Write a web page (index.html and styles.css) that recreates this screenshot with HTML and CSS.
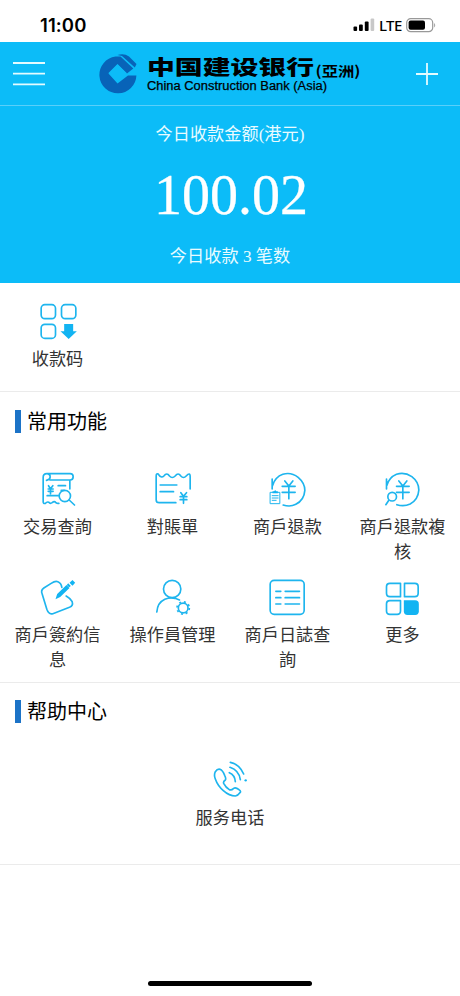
FILE: index.html
```html
<!DOCTYPE html>
<html lang="zh-Hans">
<head>
<meta charset="utf-8">
<meta name="viewport" content="width=device-width, initial-scale=1">
<title>中国建设银行(亞洲)</title>
<link rel="stylesheet" href="styles.css">
</head>
<body>
<div class="status">
  <span class="time">11:00</span>
  <div class="signals">
    <svg class="bars" width="22" height="14" viewBox="0 0 22 14"><rect x="0.5" y="8.5" width="3.6" height="4.5" rx="1"/><rect x="6" y="6.5" width="3.8" height="6.5" rx="1"/><rect x="11.8" y="3.5" width="3.8" height="9.5" rx="1"/><rect x="17.6" y="0.5" width="3.6" height="12.5" rx="1" fill="#c8c8c8"/></svg>
    <span class="lte">LTE</span>
    <svg class="battery" width="31" height="15" viewBox="0 0 31 15"><rect x="0.7" y="0.7" width="26" height="13" rx="4" fill="none" stroke="#999" stroke-width="1.2"/><rect x="2.600" y="2.600" width="16.400" height="9.200" rx="2"/><path d="M28.200 5q2 2.200 0 4.600z" fill="#999"/></svg>
  </div>
</div>
<header class="bar">
  <svg class="menu" width="34" height="26" viewBox="0 0 34 26"><path d="M1 2h32M1 12.700h32M1 23.300h32"/></svg>
  <svg class="brand" width="264" height="44" viewBox="0 0 264 44">
    <path fill="#0863b8" d="M16.500 4.500A18.500 18.500 0 1 0 37.400 23.500H29L18.500 31.500 9.500 21.500 18.500 12.500 28 21.500 34.300 16.500 21.500 4.500Z"/>
    <path fill="#0863b8" d="M18.500 3Q25 .8 30 4.500L37.500 12 35.800 15.500 23 4Z"/>
    <path fill="#0cbcf8" d="M18.500 12 27.500 21 18.500 30 9.500 21Z"/>
    <text class="brand-cn" transform="translate(48 23.300) scale(1 .8)" textLength="167" lengthAdjust="spacingAndGlyphs">中国建设银行</text>
    <text class="brand-area" x="216.500" y="23.500" textLength="45" lengthAdjust="spacingAndGlyphs">(亞洲)</text>
    <text class="brand-en" x="48" y="37.500" textLength="180" lengthAdjust="spacingAndGlyphs">China Construction Bank (Asia)</text>
  </svg>
  <svg class="plus" width="24" height="24" viewBox="0 0 24 24"><path d="M1 12h22M12 1v22"/></svg>
</header>
<section class="hero">
  <div class="caption">今日收款金额(港元)</div>
  <div class="amount">100.02</div>
  <div class="caption">今日收款 3 笔数</div>
</section>
<main>
  <section class="block quick">
    <a class="item">
      <svg class="icon" viewBox="112.500 63 120 120"><rect x="122" y="74" width="43" height="42" rx="11"/><rect x="183" y="74" width="43" height="42" rx="11"/><rect x="122" y="133" width="43" height="42" rx="11"/><path class="solid" d="M191 132h27v22h11l-24.500 23-24.500-23h11z"/></svg>
      <span>收款码</span>
    </a>
  </section>
  <section class="block common">
    <h2>常用功能</h2>
    <div class="grid" lang="zh-Hant">
      <a class="item">
        <svg class="icon" viewBox="112.500 27 120 120"><path d="M138 61q11-2 11-10 0-10-10-10-11 0-11 11v73q0 7 7 5 5-6 10-3 4 5 10 1 7-6 11 0 4 3 9 2M139 41h70q9 0 9 9t-9 10h-61M208 61v26M173 77h22M182 91h9M140 107h33M144 77l6 9 7-9M150 86v15M143 87h15M143 94h15"/><circle cx="193" cy="108" r="17"/><path d="m206 120 16 15"/></svg>
        <span>交易查詢</span>
      </a>
      <a class="item">
        <svg class="icon" viewBox="457.500 27 120 120"><path d="M526 128h-50q-9 0-9-9V49q0-10 6-7 9 14 17 6 9-12 17 0 8 9 17 0 9-12 17 0 8 9 16 0 12-13 12 2v37M479 75h50M479 95h40M541 98l8 11 9-11M549 109v21M539 110h20M539 119h20"/></svg>
        <span>對賬單</span>
      </a>
      <a class="item">
        <svg class="icon" viewBox="112.500 27 120 120"><path d="M125 57v30M126 77q8-26 31-34 24-8 46 9 20 17 20 39-2 29-27 42-17 9-38 2M163 63l12 15 12-15M175 78v38M155 79h39M155 97h39"/><g class="fine"><path d="M120 97h28v34h-28zM125 107h18M125 114h18M125 121h12"/><path class="solid" d="M126 94h5l3-4 3 4h5v6h-16z"/></g></svg>
        <span>商戶退款</span>
      </a>
      <a class="item">
        <svg class="icon" viewBox="457.500 27 120 120"><path d="M468 57v30M469 77q6-24 29-34 24-8 46 7 21 16 21 40-2 29-26 42-19 9-40 2M505 63l12 15 12-15M517 78v38M498 79h38M498 97h38"/><circle cx="485" cy="110" r="13" stroke-width="5"/><path stroke-width="5" d="m475 121-9 13"/></svg>
        <span>商戶退款複核</span>
      </a>
      <a class="item">
        <svg class="icon" viewBox="112.500 21 120 120"><path d="M184 52q-2-13-12-17-8-3-20 5l-22 14q-10 7-5 18l14 46q6 17 18 13l50-19q12-5 8-17-4-9-18-17"/><path class="solid" d="m165 88 5-16 28-27 9 9-28 27zM203 40l8 8-5 4-7-7zM216 30l8 8-8 9-9-9z"/></svg>
        <span>商戶簽約信息</span>
      </a>
      <a class="item">
        <svg class="icon" viewBox="457.500 21 120 120"><circle cx="515" cy="57" r="26"/><path d="M469 126q2-28 24-38 15-7 31-3l13 5"/><circle cx="548" cy="114" r="14.500"/><circle class="teeth" cx="548" cy="114" r="18.500"/></svg>
        <span>操作員管理</span>
      </a>
      <a class="item">
        <svg class="icon" viewBox="112.500 21 120 120"><rect x="119" y="31" width="102" height="102" rx="12"/><path d="M136 64h15M164 64h43M136 83h15M164 83h43M136 102h15M164 102h43"/></svg>
        <span>商戶日誌查詢</span>
      </a>
      <a class="item">
        <svg class="icon" viewBox="457.500 21 120 120"><path d="M478 40h32v40h-32q-10 0-10-10V50q0-10 10-10zM522 40h31q10 0 10 10v20q0 10-10 10h-31zM478 92h32v31q0 10-10 10h-22q-10 0-10-10v-21q0-10 10-10z"/><path class="solid" d="M520 91h34q11 0 11 11v22q0 11-11 11h-23q-11 0-11-11z"/></svg>
        <span>更多</span>
      </a>
    </div>
  </section>
  <section class="block help">
    <h2>帮助中心</h2>
    <a class="item">
      <svg class="icon" viewBox="90 30 120 120"><path d="M120 58q-8-2-14 7-5 10 0 22 7 20 24 35 18 16 36 16 8-1 15-11 2-5-4-8-10-8-16-4-7 7-13 4-11-7-17-19-2-5 5-10 3-4-2-14-6-15-14-18zM148 68q17 7 18 27M150 52q27 9 31 37M151 37q27 5 40 35"/><circle class="solid" cx="197" cy="91" r="3.500"/></svg>
      <span>服务电话</span>
    </a>
  </section>
</main>
<div class="home"></div>
</body>
</html>
```

FILE: styles.css
```css
* { box-sizing: border-box; }

body {
  margin: 0;
  min-height: 996px;
  display: flex;
  flex-direction: column;
  background: #fff;
  color: #333;
  font-family: "Liberation Sans", "Noto Sans CJK SC", sans-serif;
}

.status {
  height: 42px;
  padding: 8px 23px 0 40px;
  display: flex;
  align-items: center;
  justify-content: space-between;
  color: #000;
}

.time { font: 600 18.5px/24px Inter, sans-serif; letter-spacing: 0.1px; }
.signals { display: flex; align-items: center; }
.lte { font: 500 15px/20px "Noto Sans", sans-serif; margin: 0 5px 0 4px; width: 22px; letter-spacing: -0.6px; }

.bar {
  height: 64px;
  padding: 0 21px 0 12px;
  display: flex;
  align-items: center;
  background: #0cbcf8;
  border-bottom: 1px solid #5acffa;
}

.menu, .plus { fill: none; stroke: #e4fbff; stroke-width: 1.8; }
.brand { margin-left: 53px; }
.plus { margin-left: auto; }
.brand text { fill: #000; }
.brand-cn { font: 900 25px "Noto Sans CJK SC", sans-serif; }
.brand-area { font: 700 14px "Noto Sans CJK TC", sans-serif; }
.brand-en { font: 12.5px "Liberation Sans", sans-serif; stroke: #000; stroke-width: 0.25; }

.hero {
  height: 177px;
  padding-top: 16px;
  background: #0cbcf8;
  color: #e9fbff;
  text-align: center;
  font-family: "Liberation Serif", "Noto Sans CJK SC", serif;
}

.caption { font-size: 17.2px; line-height: 26px; }
.amount { font-size: 56px; line-height: 64px; margin: 15px 0 17px; padding-left: 2px; color: #fff; -webkit-text-stroke: 0.3px #fff; }

.block { border-bottom: 1px solid #ebebeb; }
.quick { height: 109px; padding-top: 18px; }
.common { height: 291px; padding-top: 18px; }
.help { height: 182px; padding-top: 17px; }

h2 {
  margin: 0 0 0 15px;
  height: 25px;
  display: flex;
  align-items: center;
  font-size: 20px;
  line-height: 24px;
  padding-bottom: 2px;
  font-weight: 400;
  color: #000;
}

h2::before {
  content: "";
  width: 6px;
  height: 23px;
  margin-right: 6px;
  background: #1c73c7;
}

.grid {
  display: grid;
  grid-template-columns: repeat(4, 1fr);
  grid-auto-rows: 108px;
  margin-top: 34px;
  font-family: "Liberation Sans", "Noto Sans CJK TC", sans-serif;
}

.item {
  width: 115px;
  padding: 0 12px;
  display: flex;
  flex-direction: column;
  align-items: center;
  gap: 5px;
  font-size: 17.2px;
  line-height: 25.5px;
  text-align: center;
}

.item span { padding-top: 0.5px; }
.help .item { margin: 35px auto 0; }

.icon {
  width: 40px;
  height: 40px;
  fill: none;
  stroke: #1eb5ee;
  stroke-width: 5;
  stroke-linecap: round;
  stroke-linejoin: round;
}

.icon .solid { fill: #12b4f2; stroke: none; }
.icon .fine { stroke-width: 3; }
.icon .teeth { stroke-width: 5; stroke-linecap: butt; stroke-dasharray: 6 8.53; }

.home {
  width: 164px;
  height: 5px;
  margin: auto auto 10px;
  border-radius: 3px;
  background: #000;
}
```
